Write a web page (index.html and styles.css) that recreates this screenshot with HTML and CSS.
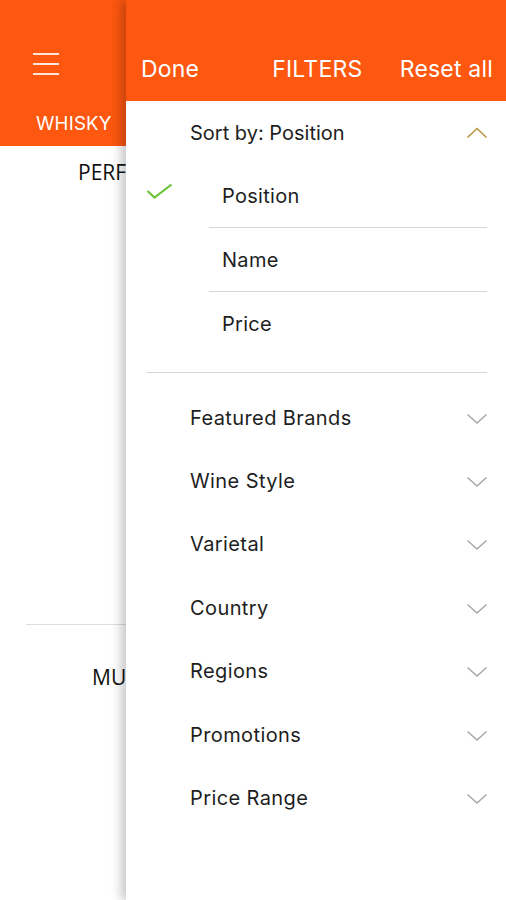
FILE: index.html
```html
<!DOCTYPE html>
<html>
<head>
<meta charset="utf-8">
<link rel="stylesheet" href="styles.css">
</head>
<body>
<div class="page">
  <div class="topbar">
    <div class="burger"><span></span><span></span><span></span></div>
  </div>
  <div class="tabs"><span class="tab">WHISKY</span></div>
  <div class="products">
    <div class="product"><span class="pname">PERFECT</span></div>
    <div class="product second"><span class="pname">MUSCAT</span></div>
  </div>
</div>

<div class="panel">
  <div class="phead">
    <span class="done">Done</span>
    <span class="title">FILTERS</span>
    <span class="reset">Reset all</span>
  </div>

  <div class="sort">
    <div class="row sortrow">
      <span>Sort by: Position</span>
      <svg class="chev" width="22" height="12" viewBox="0 0 22 12"><path d="M1.5 10.5 L11 1.5 L20.5 10.5" fill="none" stroke="#b8973f" stroke-width="1.6"/></svg>
    </div>
    <div class="options">
      <div class="opt sel">
        <svg class="check" width="27" height="16" viewBox="0 0 27 16"><path d="M1.5 8 L8.5 14.5 L25.5 1.5" fill="none" stroke="#6cc43a" stroke-width="2.2"/></svg>
        <span>Position</span>
      </div>
      <div class="opt"><span>Name</span></div>
      <div class="opt last"><span>Price</span></div>
    </div>
  </div>

  <div class="filters">
    <div class="row frow"><span>Featured Brands</span><svg class="chev" width="22" height="12" viewBox="0 0 22 12"><path d="M1.5 1.5 L11 10 L20.5 1.5" fill="none" stroke="#a9a9a9" stroke-width="1.6"/></svg></div>
    <div class="row frow"><span>Wine Style</span><svg class="chev" width="22" height="12" viewBox="0 0 22 12"><path d="M1.5 1.5 L11 10 L20.5 1.5" fill="none" stroke="#a9a9a9" stroke-width="1.6"/></svg></div>
    <div class="row frow"><span>Varietal</span><svg class="chev" width="22" height="12" viewBox="0 0 22 12"><path d="M1.5 1.5 L11 10 L20.5 1.5" fill="none" stroke="#a9a9a9" stroke-width="1.6"/></svg></div>
    <div class="row frow"><span>Country</span><svg class="chev" width="22" height="12" viewBox="0 0 22 12"><path d="M1.5 1.5 L11 10 L20.5 1.5" fill="none" stroke="#a9a9a9" stroke-width="1.6"/></svg></div>
    <div class="row frow"><span>Regions</span><svg class="chev" width="22" height="12" viewBox="0 0 22 12"><path d="M1.5 1.5 L11 10 L20.5 1.5" fill="none" stroke="#a9a9a9" stroke-width="1.6"/></svg></div>
    <div class="row frow"><span>Promotions</span><svg class="chev" width="22" height="12" viewBox="0 0 22 12"><path d="M1.5 1.5 L11 10 L20.5 1.5" fill="none" stroke="#a9a9a9" stroke-width="1.6"/></svg></div>
    <div class="row frow"><span>Price Range</span><svg class="chev" width="22" height="12" viewBox="0 0 22 12"><path d="M1.5 1.5 L11 10 L20.5 1.5" fill="none" stroke="#a9a9a9" stroke-width="1.6"/></svg></div>
  </div>
</div>
</body>
</html>
```

FILE: styles.css
```css
* { box-sizing: border-box; }
html, body { margin: 0; padding: 0; }
body {
  width: 506px;
  height: 900px;
  overflow: hidden;
  background: #fff;
  font-family: Inter, "Noto Sans", sans-serif;
  color: #1e1e1e;
  position: relative;
}

/* background page */
.page { width: 506px; height: 900px; overflow: hidden; }
.topbar {
  height: 101px;
  background: #fd5710;
  display: flex;
  align-items: center;
  padding: 0 0 0 33px;
}
.burger {
  width: 26px;
  display: flex;
  flex-direction: column;
  gap: 8px;
  margin-top: 26px;
}
.burger span {
  display: block;
  height: 2px;
  background: #ffe6da;
}
.tabs {
  height: 45px;
  background: #fd5710;
  display: flex;
  align-items: center;
  padding-left: 36px;
}
.tab {
  color: #fff;
  font-size: 18.7px;
  letter-spacing: 0.2px;
}
.products { padding: 0 0 0 26px; }
.product {
  height: 479px;
  border-bottom: 1px solid #ddd;
  padding: 12px 0 0 52px;
}
.product.second { height: auto; border-bottom: none; padding: 38px 0 0 66px; }
.pname {
  font-family: "Open Sans", sans-serif;
  font-size: 21px;
  color: #111;
}

/* filter panel overlay */
.panel {
  position: absolute;
  left: 126px;
  top: 0;
  width: 380px;
  height: 900px;
  background: #fff;
  box-shadow: -5px 0 10px rgba(0, 0, 0, 0.22);
}
.phead {
  height: 101px;
  background: #fd5710;
  color: #fff;
  display: flex;
  align-items: center;
  padding: 37px 13px 0 15px;
  font-size: 23px;
  letter-spacing: 0.2px;
}
.title { margin-left: 73px; }
.reset { margin-left: auto; }

.row {
  display: flex;
  align-items: center;
  justify-content: space-between;
  padding: 0 18px 0 64px;
  font-size: 20px;
  letter-spacing: 0.4px;
}
.sortrow { height: 63px; letter-spacing: 0; }
.options {
  margin-left: 20px;
  margin-right: 19px;
  border-bottom: 1px solid #d6d6d6;
  padding-bottom: 16px;
}
.opt {
  height: 64px;
  display: flex;
  align-items: center;
  font-size: 20px;
  letter-spacing: 0.3px;
  padding-left: 76px;
  position: relative;
}
.opt::after {
  content: "";
  position: absolute;
  left: 63px;
  right: 0;
  bottom: 0;
  border-bottom: 1px solid #d6d6d6;
}
.opt.last::after { display: none; }
.opt .check {
  position: absolute;
  left: 0;
  top: 19px;
}
.filters { padding-top: 13px; }
.frow { height: 63.4px; }
.frow .chev { margin-top: 2px; }
```
